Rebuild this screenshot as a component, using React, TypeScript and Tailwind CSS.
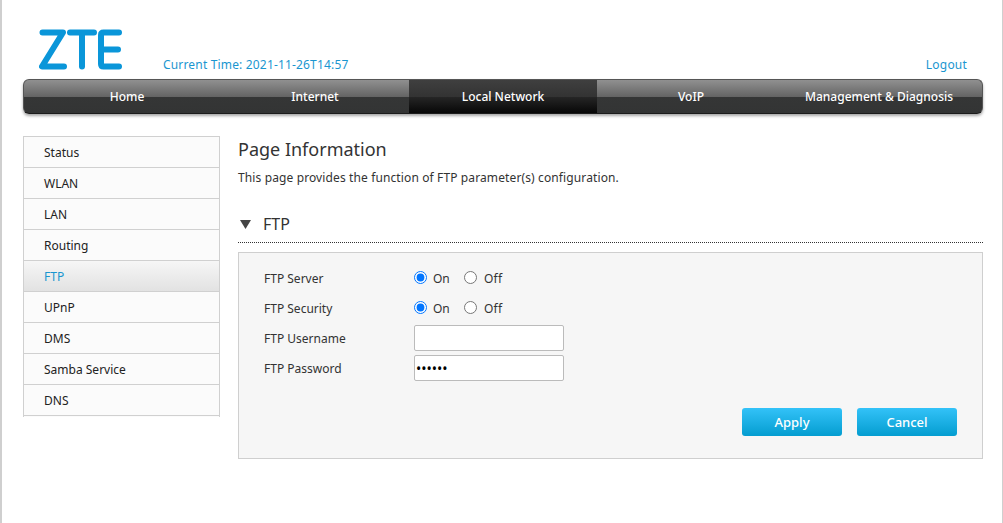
const menu = ["Status", "WLAN", "LAN", "Routing", "FTP", "UPnP", "DMS", "Samba Service", "DNS"];
const tabs = ["Home", "Internet", "Local Network", "VoIP", "Management & Diagnosis"];

function Logo() {
  return (
    <svg width="84" height="41" viewBox="0 0 84 41" className="block">
      <g fill="none" stroke="#0a96d9" strokeWidth="6" strokeLinecap="round" strokeLinejoin="round">
        <path d="M3.5 3.5H24L3 37.5H25" />
        <path d="M31 3.5H55M43 3.5V37.5" />
        <path d="M80 3.5H64.5Q62 3.5 62 6V35Q62 37.5 64.5 37.5H80M62 20.5H79" />
      </g>
    </svg>
  );
}

function RadioPair({ name }: { name: string }) {
  return (
    <div className="flex items-center text-[#333]">
      <label className="flex w-[50px] items-center">
        <input type="radio" name={name} defaultChecked className="m-0 mr-[6px] h-[13px] w-[13px] -translate-y-[1px]" />
        <span className="pt-[2px]">On</span>
      </label>
      <label className="flex items-center">
        <input type="radio" name={name} className="m-0 mr-[7px] h-[13px] w-[13px] -translate-y-[1px]" />
        <span className="pt-[2px] tracking-[0.2px]">Off</span>
      </label>
    </div>
  );
}

function Row({ label, children }: { label: string; children: React.ReactNode }) {
  return (
    <div className="flex h-[30px] items-center">
      <div className="w-[150px] pt-[2px] text-[#333]">{label}</div>
      {children}
    </div>
  );
}

export default function App() {
  return (
    <div className="min-h-[523px] border-r border-l-2 border-[#cfcfcf] bg-white text-[12px] font-['Noto_Sans',sans-serif]">
      <div className="flex h-[79px] items-end pr-[35px] pl-[37px]">
        <div className="pb-[9px]">
          <Logo />
        </div>
        <div className="ml-[40px] pb-[5px] tracking-[0.17px] text-[#1a96d0]">Current Time: 2021-11-26T14:57</div>
        <div className="ml-auto pb-[5px] tracking-[0.2px] text-[#1a96d0]">Logout</div>
      </div>

      <div className="mr-[19px] ml-[21px] flex h-[35px] overflow-hidden rounded-[6px] border border-[#555] border-b-[#1c1c1c] bg-[linear-gradient(#909090,#646464_51%,#353636_51%,#333434)] pr-[9px] pl-[9px] shadow-[0_2px_3px_rgba(0,0,0,0.35)]">
        {tabs.map((tab) => (
          <div
            key={tab}
            className={
              tab === "Local Network"
                ? "flex w-[188px] shrink-0 items-center justify-center bg-[linear-gradient(#3f3f3f,#333_51%,#262626_51%,#070707)] font-medium text-white"
                : "flex w-[188px] shrink-0 items-center justify-center font-medium text-white"
            }
          >
            {tab}
          </div>
        ))}
      </div>

      <div className="mt-[22px] mr-[19px] ml-[21px] flex gap-[18px]">
        <div className="h-[281px] w-[197px] shrink-0 border border-b-0 border-[#d0d0d0] bg-[#fbfbfb]">
          {menu.map((item) => (
            <div
              key={item}
              className={
                item === "FTP"
                  ? "flex h-[31px] items-center border-b border-[#d0d0d0] bg-[linear-gradient(#f6f6f6,#e2e2e2)] pt-[2px] pl-5 text-[#1a96d0]"
                  : "flex h-[31px] items-center border-b border-[#d0d0d0] pt-[2px] pl-5 text-[#222]"
              }
            >
              {item}
            </div>
          ))}
        </div>

        <div className="min-w-0 flex-1">
          <h1 className="text-[18px] leading-[26px] text-[#333]">Page Information</h1>
          <p className="mt-[7px] leading-[18px] tracking-[0.12px] text-[#333]">This page provides the function of FTP parameter(s) configuration.</p>

          <div className="mt-[20px] flex h-[36px] items-center border-b border-dotted border-[#333] pb-[1px]">
            <svg width="11" height="9" viewBox="0 0 11 9" className="mr-[12px] ml-[2px]">
              <path d="M0 0H11L5.5 9Z" fill="#444" />
            </svg>
            <span className="text-[16px] text-[#333]">FTP</span>
          </div>

          <div className="mt-[9px] h-[207px] border border-[#cfcfcf] bg-[#f6f6f6] pt-[10px] pr-[25px] pl-[25px]">
            <Row label="FTP Server">
              <RadioPair name="server" />
            </Row>
            <Row label="FTP Security">
              <RadioPair name="security" />
            </Row>
            <Row label="FTP Username">
              <input type="text" className="h-[26px] w-[150px] rounded-[2px] border border-[#bbb] bg-white px-[2px] outline-none" />
            </Row>
            <Row label="FTP Password">
              <input type="password" defaultValue="123456" className="h-[26px] w-[150px] rounded-[2px] border border-[#bbb] bg-white px-[1px] text-[14px] outline-none" />
            </Row>
            <div className="mt-[25px] flex justify-end gap-[15px]">
              <button className="h-[28px] w-[100px] rounded-[3px] bg-[linear-gradient(#33c2f8,#049dd0)] pt-[2px] text-[13px] font-medium text-white">Apply</button>
              <button className="h-[28px] w-[100px] rounded-[3px] bg-[linear-gradient(#33c2f8,#049dd0)] pt-[2px] text-[13px] font-medium text-white">Cancel</button>
            </div>
          </div>
        </div>
      </div>
    </div>
  );
}
